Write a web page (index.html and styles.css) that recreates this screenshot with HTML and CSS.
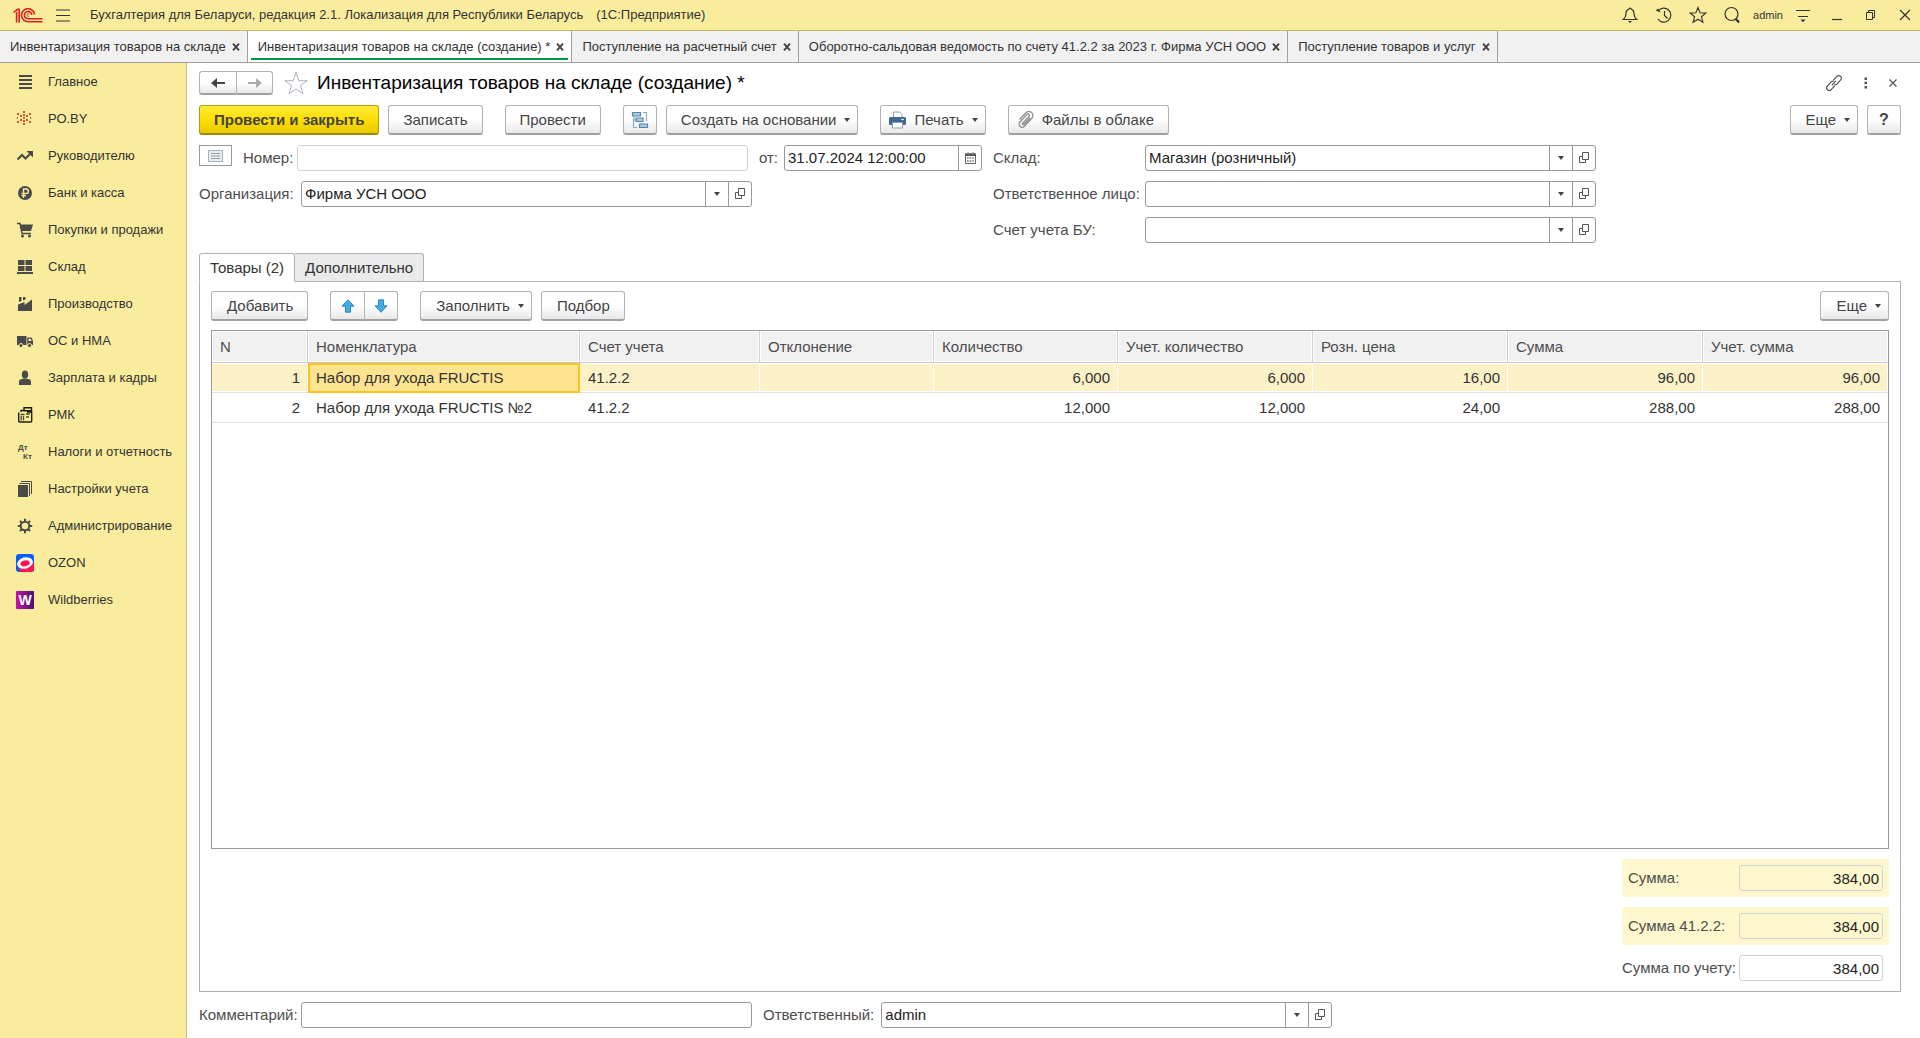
FILE: index.html
```html
<!DOCTYPE html>
<html lang="ru">
<head>
<meta charset="utf-8">
<meta name="viewport" content="width=device-width, initial-scale=1">
<title>Инвентаризация товаров на складе (создание) *</title>
<link rel="stylesheet" href="styles.css">
</head>
<body>
<svg class="defs" aria-hidden="true">
  <symbol id="i-open" viewBox="0 0 12 12"><path d="M4.500.5h6v7h-6zM4 4.500H1.500v6h6V8" fill="none" stroke="#555"/></symbol>
  <symbol id="i-x" viewBox="0 0 8 8"><path d="M1 .7l6 6.600M7 .7L1 7.300" stroke="#444" stroke-width="2"/></symbol>
  <symbol id="i-caret" viewBox="0 0 6 4"><path d="M0 0h6L3 4z" fill="#444"/></symbol>
</svg>

<header class="titlebar">
  <svg class="logo" viewBox="0 0 30 15" role="img" aria-label="1С"><g fill="none" stroke="#dc1f1f" stroke-width="1.600"><path d="M.5 4.500L4.500 1.300H6.200V14.500M3.600 4v10.500"/><path d="M21.500 6.500A6.500 6.500 0 1 0 15.500 13.700H29.500"/><path d="M18.800 7A3.700 3.700 0 1 0 15.500 10.800H29.500" /><path d="M16.500 6.500a1.300 1.300 0 1 0-.8 1.800" stroke-width="1"/></g></svg>
  <button class="ghost menu" type="button" aria-label="Меню"><svg width="14" height="13" viewBox="0 0 14 13"><path d="M0 1h14M0 6.500h14M0 12h14" stroke="#333" stroke-width="1.200"/></svg></button>
  <span class="app-name">Бухгалтерия для Беларуси, редакция 2.1. Локализация для Республики Беларусь</span>
  <span>(1С:Предприятие)</span>
  <div class="tools">
    <button class="ghost" type="button" aria-label="Уведомления"><svg width="18" height="18" viewBox="0 0 18 18"><path d="M9 2c-.6 0-1 .4-1 1-2 .7-3 2.200-3 4.500 0 3-1 4.500-2.700 6h13.400C14 12 13 10.500 13 7.500 13 5.200 12 3.700 10 3c0-.6-.4-1-1-1z" fill="none" stroke="#333" stroke-width="1.200"/><path d="M7 15h4l-2 2z" fill="#333"/></svg></button>
    <button class="ghost" type="button" aria-label="История"><svg width="18" height="18" viewBox="0 0 18 18"><path d="M3.200 5A7 7 0 1 1 3 13M9.500 5v4.500l3 3" fill="none" stroke="#333" stroke-width="1.200"/><path d="M.8 4.500l5 2L3 2.500z" fill="#333"/></svg></button>
    <button class="ghost" type="button" aria-label="Избранное"><svg width="18" height="18" viewBox="0 0 18 18"><path d="M9 1.500l2.100 5.300 5.700.3-4.400 3.600 1.500 5.600L9 13.200l-4.900 3.100 1.500-5.600L1.200 7.100l5.700-.3z" fill="none" stroke="#333" stroke-width="1.100"/></svg></button>
    <button class="ghost" type="button" aria-label="Поиск"><svg width="18" height="18" viewBox="0 0 18 18"><circle cx="8.500" cy="8" r="6.500" fill="none" stroke="#333" stroke-width="1.200"/><path d="M12.500 12.500l3.500 4" stroke="#333" stroke-width="2.200"/></svg></button>
    <a class="user" href="#">admin</a>
    <button class="ghost" type="button" aria-label="Настройка"><svg width="16" height="18" viewBox="0 0 16 18"><path d="M1 4.500h14M3 10.500h10" stroke="#333" stroke-width="1.200"/><path d="M5.500 13.500h5L8 16.200z" fill="#333"/></svg></button>
    <button class="ghost" type="button" aria-label="Свернуть"><svg width="16" height="18" viewBox="0 0 16 18"><path d="M3 13.500h10" stroke="#333" stroke-width="1.200"/></svg></button>
    <button class="ghost" type="button" aria-label="Развернуть"><svg width="16" height="18" viewBox="0 0 16 18"><path d="M3.500 6.500h6v7h-6zM5.500 6V4.500h6v7H10" fill="none" stroke="#333"/></svg></button>
    <button class="ghost" type="button" aria-label="Закрыть программу"><svg width="16" height="18" viewBox="0 0 16 18"><path d="M3 4l10 10M13 4L3 14" stroke="#333" stroke-width="1.200"/></svg></button>
  </div>
</header>

<nav class="windows" aria-label="Открытые окна">
  <div class="window"><a href="#">Инвентаризация товаров на складе</a><button class="ghost" type="button" aria-label="Закрыть"><svg width="8" height="8"><use href="#i-x"/></svg></button></div>
  <div class="window current"><a href="#" aria-current="page">Инвентаризация товаров на складе (создание) *</a><button class="ghost" type="button" aria-label="Закрыть"><svg width="8" height="8"><use href="#i-x"/></svg></button></div>
  <div class="window"><a href="#">Поступление на расчетный счет</a><button class="ghost" type="button" aria-label="Закрыть"><svg width="8" height="8"><use href="#i-x"/></svg></button></div>
  <div class="window"><a href="#">Оборотно-сальдовая ведомость по счету 41.2.2 за 2023 г. Фирма УСН ООО</a><button class="ghost" type="button" aria-label="Закрыть"><svg width="8" height="8"><use href="#i-x"/></svg></button></div>
  <div class="window"><a href="#">Поступление товаров и услуг</a><button class="ghost" type="button" aria-label="Закрыть"><svg width="8" height="8"><use href="#i-x"/></svg></button></div>
</nav>

<div class="workspace">
  <nav class="sections" aria-label="Разделы">
    <a href="#"><svg viewBox="0 0 18 18"><path d="M3 3h13M3 7h13M3 11h13M3 15h13" stroke="#4a4a4a" stroke-width="2"/></svg>Главное</a>
    <a href="#"><svg viewBox="0 0 18 18"><path d="M7 1h2v2H7zM7 4h2v2H7zM7 7h2v2H7zM7 10h2v2H7zM7 13h2v2H7zM4 5h2v2H4zM4 9h2v2H4zM10 5h2v2h-2zM10 9h2v2h-2zM1 3h2v2H1zM1 11h2v2H1zM13 3h2v2h-2zM13 11h2v2h-2zM1 7h1v2H1zM14 7h1v2h-1z" fill="#d9532c"/></svg>РО.BY</a>
    <a href="#"><svg viewBox="0 0 18 18"><path d="M1.500 12.500L6 8l3.500 3.500L15 6" fill="none" stroke="#4a4a4a" stroke-width="2.200"/><path d="M10.500 4H17v6.500z" fill="#4a4a4a"/></svg>Руководителю</a>
    <a href="#"><svg viewBox="0 0 18 18"><circle cx="9" cy="9" r="7" fill="#4a4a4a"/><path d="M7.500 14V5h2.700a2.200 2.200 0 0 1 0 4.400H5.500M5.500 11.500h4.500" fill="none" stroke="#faec9d" stroke-width="1.400"/></svg>Банк и касса</a>
    <a href="#"><svg viewBox="0 0 18 18"><path d="M1 2.500h3l2 10h9" fill="none" stroke="#4a4a4a" stroke-width="1.400"/><path d="M4 3.500h13L15 10H5.500z" fill="#4a4a4a"/><circle cx="6.500" cy="15" r="1.500" fill="#4a4a4a"/><circle cx="13.500" cy="15" r="1.500" fill="#4a4a4a"/></svg>Покупки и продажи</a>
    <a href="#"><svg viewBox="0 0 18 18"><path d="M2 2h6.500v5H2zM9.500 2H16v5H9.500zM2 8h6.500v5H2zM9.500 8H16v5H9.500zM1 14h16v2H1z" fill="#4a4a4a"/></svg>Склад</a>
    <a href="#"><svg viewBox="0 0 18 18"><path d="M2 16V9.500L8.500 7v3L16 4.500V16zM3 2h2.500v4L3 7zM7 2h2.500v2.500L7 5.500z" fill="#4a4a4a"/></svg>Производство</a>
    <a href="#"><svg viewBox="0 0 18 18"><path d="M1 4h9.500v9H1zM11.200 5.500h4.300L17 9v4h-5.800z" fill="#4a4a4a"/><path d="M12.500 6.700h2.200l.9 2.300h-3.100z" fill="#faec9d"/><g fill="#4a4a4a" stroke="#faec9d"><circle cx="5" cy="13.500" r="2"/><circle cx="13.500" cy="13.500" r="2"/></g></svg>ОС и НМА</a>
    <a href="#"><svg viewBox="0 0 18 18"><ellipse cx="9" cy="5.500" rx="3.200" ry="4" fill="#4a4a4a"/><path d="M3 16v-3.500c0-2 2.500-2.500 4.500-3h3c2 .5 4.500 1 4.500 3V16z" fill="#4a4a4a"/></svg>Зарплата и кадры</a>
    <a href="#"><svg viewBox="0 0 18 18"><path d="M2.700 6.500V15q0 1 1 1h11q1 0 1-1V6h-4V4.500M5 6V4.500h3M8 1.700h7.500v3H8z" fill="none" stroke="#1c1c10" stroke-width="1.400"/><path d="M4.500 8.500h4M5.200 10v4.500M7.500 10v4.500M10 8h4M10 11h3" stroke="#4a4a2a" stroke-width="1.300"/></svg>РМК</a>
    <a href="#"><svg class="dtkt" viewBox="0 0 18 18"><text x="2" y="7">Дт</text><text x="7" y="16">Кт</text></svg>Налоги и отчетность</a>
    <a href="#"><svg viewBox="0 0 18 18"><path d="M2 5h10v12H2z" fill="#4a4a4a"/><path d="M3.500 3.500h10V16M5 1.500h10.500V14" fill="none" stroke="#4a4a4a"/></svg>Настройки учета</a>
    <a href="#"><svg viewBox="0 0 18 18"><circle cx="9" cy="9" r="4.300" fill="none" stroke="#4a4a4a" stroke-width="2"/><path d="M9 1.800v3M9 13.200v3M1.800 9h3M13.200 9h3M3.900 3.900L6 6M12 12l2.100 2.100M14.100 3.900L12 6M6 12l-2.100 2.100" stroke="#4a4a4a" stroke-width="2"/></svg>Администрирование</a>
    <a href="#"><svg viewBox="0 0 18 18"><rect width="18" height="18" rx="3" fill="#0a5cff"/><path d="M18 9v6q0 3-3 3H4L3 14z" fill="#fb1654"/><ellipse cx="9" cy="9" rx="8" ry="5.600" transform="rotate(-15 9 9)" fill="#fff"/><ellipse cx="9" cy="9.300" rx="4.800" ry="2.900" transform="rotate(-12 9 9)" fill="#fb1654"/></svg>OZON</a>
    <a href="#"><svg class="wb" viewBox="0 0 18 18"><defs><linearGradient id="wbg"><stop offset="0" stop-color="#cb11a5"/><stop offset="1" stop-color="#45136f"/></linearGradient></defs><rect width="18" height="18" rx="1" fill="url(#wbg)"/><text x="9" y="14" text-anchor="middle">W</text></svg>Wildberries</a>
  </nav>

  <main class="document">
    <div class="heading">
      <div class="group history">
        <button class="btn" type="button" aria-label="Назад"><svg width="14" height="10" viewBox="0 0 14 10"><path d="M14 5H3" stroke="#444" stroke-width="2"/><path d="M0 5l6-5v10z" fill="#444"/></svg></button>
        <button class="btn" type="button" aria-label="Вперед"><svg width="14" height="10" viewBox="0 0 14 10"><path d="M0 5h11" stroke="#aaa" stroke-width="2"/><path d="M14 5L8 0v10z" fill="#aaa"/></svg></button>
      </div>
      <button class="ghost" type="button" aria-label="В избранное"><svg width="24" height="24" viewBox="0 0 24 24"><path d="M12 1.500l2.800 8.200h8.400l-6.700 5 2.500 8L12 17.800 5 22.700l2.500-8-6.700-5h8.400z" fill="none" stroke="#aab2ba"/></svg></button>
      <h1>Инвентаризация товаров на складе (создание) *</h1>
      <div class="heading-tools">
        <button class="ghost" type="button" aria-label="Получить ссылку"><svg width="18" height="18" viewBox="0 0 18 18"><g fill="none" stroke="#555" stroke-width="1.200" stroke-linecap="round"><path d="M8.500 6.200l3.300-3.800a2.600 2.600 0 0 1 3.900 3.500l-3.500 4a2.400 2.400 0 0 1-2.300.8"/><path d="M9.500 11.800l-3.300 3.800a2.600 2.600 0 0 1-3.900-3.500l3.500-4a2.400 2.400 0 0 1 2.300-.8"/><path d="M7.300 10.900l3.400-3.800"/></g></svg></button>
        <button class="ghost" type="button" aria-label="Еще"><svg width="4" height="12" viewBox="0 0 4 12"><path d="M.5.5h2.500v2.500H.5zM.5 4.800h2.500v2.500H.5zM.5 9h2.500v2.500H.5z" fill="#555"/></svg></button>
        <button class="ghost" type="button" aria-label="Закрыть документ"><svg width="8" height="8" viewBox="0 0 8 8"><path d="M.5.5l7 7M7.500.5l-7 7" stroke="#555" stroke-width="1.200"/></svg></button>
      </div>
    </div>

    <div class="toolbar">
      <button class="btn primary" type="button">Провести и закрыть</button>
      <button class="btn apart" type="button">Записать</button>
      <button class="btn apart" type="button">Провести</button>
      <button class="btn icon" type="button" aria-label="Структура подчиненности"><svg width="18" height="18" viewBox="0 0 18 18"><path d="M3 5v4h3M10 12v3h3M12 1.500h3.500V10M2.500 8v8.500H6" fill="none" stroke="#87adc9" stroke-width="1.200"/><path d="M1.500 1.500h8v3.500h-8zM5 7h7v3.500H5zM8.500 13h8v3.500h-8z" fill="#a9c9df" stroke="#5688ad" stroke-width="1.200"/></svg></button>
      <button class="btn apart more" type="button" aria-haspopup="menu">Создать на основании<svg width="6" height="4"><use href="#i-caret"/></svg></button>
      <button class="btn apart more with-icon" type="button" aria-haspopup="menu"><svg width="17" height="18" viewBox="0 0 17 18"><path d="M4.500 8V1h6l2.500 2.500V8" fill="#fff" stroke="#8aa0b2"/><rect y="6" width="17" height="8" rx="1.500" fill="#41698f"/><path d="M3.500 11.500h10v5.500h-10z" fill="#fff" stroke="#8aa0b2"/><path d="M12 8.500h3" stroke="#cfe0ee" stroke-width="1.200"/></svg>Печать<svg width="6" height="4"><use href="#i-caret"/></svg></button>
      <button class="btn with-icon" type="button"><svg width="17" height="18" viewBox="0 0 17 18"><path d="M5 13l7-7.500a1.400 1.400 0 0 0-2-2L3 11a3 3 0 0 0 4.300 4.300l7.500-8A4 4 0 0 0 9 1.700L2.500 8.500M5 13a1.300 1.300 0 0 0 2 .3l6-6.300" fill="none" stroke="#8c8c8c" stroke-width="1.300"/></svg>Файлы в облаке</button>
      <button class="btn more push" type="button" aria-haspopup="menu">Еще<svg width="6" height="4"><use href="#i-caret"/></svg></button>
      <button class="btn icon help" type="button" aria-label="Справка">?</button>
    </div>

    <form class="fields">
      <div class="column">
        <div class="line">
          <button class="status" type="button" aria-label="Состояние документа"><svg width="15" height="12" viewBox="0 0 15 12"><rect x=".5" y=".5" width="14" height="11" fill="#e6ebf0" stroke="#a9b4bf"/><path d="M3 3.500h9M3 6h9M3 8.500h9" stroke="#98a4b0"/></svg></button>
          <label for="number">Номер:</label>
          <input class="box quiet" id="number" type="text" readonly>
          <label class="from" for="date">от:</label>
          <span class="box date"><input id="date" type="text" value="31.07.2024 12:00:00"><button type="button" aria-label="Выбрать дату"><svg width="11" height="12" viewBox="0 0 11 12"><path d="M.5 2h10v9.500H.5z" fill="#fff" stroke="#666"/><path d="M0 1.500h11V4H0z" fill="#555"/><path d="M3 0v3M8 0v3" stroke="#888"/><path d="M2 6h7M2 9h7" stroke="#777" stroke-width="1.300" stroke-dasharray="1.600 1"/></svg></button></span>
        </div>
        <div class="line">
          <label class="lead" for="org">Организация:</label>
          <span class="box"><select id="org"><option>Фирма УСН ООО</option></select><span class="drop"><svg width="6" height="4"><use href="#i-caret"/></svg></span><button type="button" aria-label="Открыть"><svg width="12" height="12"><use href="#i-open"/></svg></button></span>
        </div>
      </div>
      <div class="column second">
        <div class="line">
          <label for="store">Склад:</label>
          <span class="box"><select id="store"><option>Магазин (розничный)</option></select><span class="drop"><svg width="6" height="4"><use href="#i-caret"/></svg></span><button type="button" aria-label="Открыть"><svg width="12" height="12"><use href="#i-open"/></svg></button></span>
        </div>
        <div class="line">
          <label for="person">Ответственное лицо:</label>
          <span class="box"><select id="person"><option></option></select><span class="drop"><svg width="6" height="4"><use href="#i-caret"/></svg></span><button type="button" aria-label="Открыть"><svg width="12" height="12"><use href="#i-open"/></svg></button></span>
        </div>
        <div class="line">
          <label for="account">Счет учета БУ:</label>
          <span class="box"><select id="account"><option></option></select><span class="drop"><svg width="6" height="4"><use href="#i-caret"/></svg></span><button type="button" aria-label="Открыть"><svg width="12" height="12"><use href="#i-open"/></svg></button></span>
        </div>
      </div>
    </form>

    <div class="tabs" role="tablist">
      <button class="tab active" type="button" role="tab" aria-selected="true">Товары (2)</button>
      <button class="tab" type="button" role="tab" aria-selected="false">Дополнительно</button>
    </div>

    <section class="panel">
      <div class="toolbar">
        <button class="btn apart" type="button">Добавить</button>
        <div class="group arrows apart">
          <button class="btn" type="button" aria-label="Вверх"><svg width="14" height="14" viewBox="0 0 14 14"><path d="M7 .7l6 6.500H9.500v6h-5v-6H1z" fill="#41ace8" stroke="#2f86bb"/></svg></button>
          <button class="btn" type="button" aria-label="Вниз"><svg width="14" height="14" viewBox="0 0 14 14"><path d="M7 13.300l6-6.500H9.500v-6h-5v6H1z" fill="#41ace8" stroke="#2f86bb"/></svg></button>
        </div>
        <button class="btn more" type="button" aria-haspopup="menu">Заполнить<svg width="6" height="4"><use href="#i-caret"/></svg></button>
        <button class="btn" type="button">Подбор</button>
        <button class="btn more push" type="button" aria-haspopup="menu">Еще<svg width="6" height="4"><use href="#i-caret"/></svg></button>
      </div>

      <div class="grid">
        <table>
          <colgroup><col class="c-n"><col class="c-item"><col class="c-account"><col class="c-diff"><col class="c-qty"><col class="c-wide"><col class="c-wide"><col class="c-wide"><col class="c-last"></colgroup>
          <thead>
            <tr><th>N</th><th>Номенклатура</th><th>Счет учета</th><th>Отклонение</th><th>Количество</th><th>Учет. количество</th><th>Розн. цена</th><th>Сумма</th><th>Учет. сумма</th></tr>
          </thead>
          <tbody>
            <tr class="selected"><td class="num">1</td><td class="cursor">Набор для ухода FRUCTIS</td><td>41.2.2</td><td></td><td class="num">6,000</td><td class="num">6,000</td><td class="num">16,00</td><td class="num">96,00</td><td class="num">96,00</td></tr>
            <tr><td class="num">2</td><td>Набор для ухода FRUCTIS №2</td><td>41.2.2</td><td></td><td class="num">12,000</td><td class="num">12,000</td><td class="num">24,00</td><td class="num">288,00</td><td class="num">288,00</td></tr>
          </tbody>
        </table>
      </div>

      <div class="totals">
        <div class="total marked"><label for="sum">Сумма:</label><input class="box quiet" id="sum" type="text" value="384,00" readonly></div>
        <div class="total marked"><label for="sum-account">Сумма 41.2.2:</label><input class="box quiet" id="sum-account" type="text" value="384,00" readonly></div>
        <div class="total"><label for="sum-book">Сумма по учету:</label><input class="box quiet" id="sum-book" type="text" value="384,00" readonly></div>
      </div>
    </section>

    <div class="line footer">
      <label class="lead" for="comment">Комментарий:</label>
      <input class="box" id="comment" type="text">
      <label class="responsible" for="responsible">Ответственный:</label>
      <span class="box"><select id="responsible"><option>admin</option></select><span class="drop"><svg width="6" height="4"><use href="#i-caret"/></svg></span><button type="button" aria-label="Открыть"><svg width="12" height="12"><use href="#i-open"/></svg></button></span>
    </div>
  </main>
</div>
</body>
</html>
```
FILE: styles.css
```css
* { box-sizing: border-box; }

body {
  margin: 0;
  min-height: 100vh;
  display: flex;
  flex-direction: column;
  background: #fff;
  color: #333;
  font: 15px/18px "Liberation Sans", Arial, sans-serif;
}

button, input, select { font: inherit; color: inherit; margin: 0; }
a { color: inherit; text-decoration: none; }
svg { display: block; flex: none; }
.defs { display: none; }

.ghost {
  display: flex;
  align-items: center;
  justify-content: center;
  padding: 0;
  border: 0;
  background: none;
}

/* Title bar */
.titlebar {
  display: flex;
  align-items: center;
  height: 31px;
  padding: 0 5px 0 13px;
  border-bottom: 1px solid #c6b96a;
  background: #faec9d;
  font-size: 13px;
  white-space: nowrap;
}
.logo { width: 30px; height: 15px; }
.menu { margin: 0 20px 0 13px; }
.app-name { margin-right: 13px; }
.tools { display: flex; align-items: center; gap: 16px; margin-left: auto; }
.tools .user { font-size: 11px; margin: 0 -4px; }
.tools .user ~ .ghost { margin-right: 2px; }

/* Open windows */
.windows {
  display: flex;
  height: 32px;
  border-bottom: 1px solid #a0a0a0;
  background: #f1f1f1;
  font-size: 13px;
  white-space: nowrap;
}
.window {
  display: flex;
  align-items: center;
  gap: 6px;
  padding: 0 7px 0 10px;
  border-right: 1px solid #a0a0a0;
}
.window.current {
  background: linear-gradient(#009646, #009646) center bottom 2px / calc(100% - 6px) 2px no-repeat #fff;
}

/* Sections */
.workspace { display: flex; flex: 1; }
.sections {
  flex: none;
  width: 187px;
  border-right: 1px solid #c6bd82;
  background: #faec9d;
  font-size: 13px;
}
.sections a {
  display: flex;
  align-items: center;
  gap: 14px;
  height: 37px;
  padding-left: 16px;
  white-space: nowrap;
}
.sections svg { width: 18px; height: 18px; }
.dtkt { font-size: 8px; font-weight: bold; fill: #4a4a4a; }
.wb { font-size: 14px; font-weight: bold; fill: #fff; }

/* Document */
.document {
  display: flex;
  flex-direction: column;
  flex: 1;
  min-width: 0;
  padding: 8px 19px 10px 12px;
}
.heading { display: flex; align-items: center; gap: 11px; height: 24px; }
.heading h1 { margin: 0 0 0 -2px; font-size: 19px; font-weight: normal; line-height: 24px; color: #000; }
.heading-tools { display: flex; align-items: center; gap: 21px; margin: 0 4px 0 auto; }

.toolbar { display: flex; gap: 9px; }
.document > .toolbar { margin-top: 10px; }

.btn {
  display: flex;
  align-items: center;
  justify-content: center;
  height: 30px;
  padding: 0 14px;
  border: 1px solid #b3b3b3;
  border-bottom: 2px solid #a0a0a0;
  border-radius: 3px;
  background: linear-gradient(#fff 50%, #e8e8e8);
  color: #444;
  white-space: nowrap;
}
.btn.primary {
  border-color: #b0a010 #b0a010 #9c8c00;
  background: linear-gradient(#ffe93b, #ffdf00 50%, #e8c800);
  font-weight: bold;
}
.btn.apart, .group.apart { margin-right: 13px; }
.btn.icon { width: 34px; padding: 0; }
.btn.help { font-weight: bold; font-size: 16px; }
.btn.more { gap: 8px; padding-right: 7px; }
.btn.with-icon { gap: 8px; padding-left: 8px; }
.btn.push { margin-left: auto; }

.group { display: flex; }
.group .btn { width: 34px; padding: 0; }
.group .btn:first-child { border-right: 0; border-radius: 3px 0 0 3px; }
.group .btn:last-child { border-radius: 0 3px 3px 0; }
.history .btn { width: 37px; height: 24px; }

/* Form */
.fields { display: flex; gap: 11px; margin: 10px 0; color: #444; }
.column { display: flex; flex-direction: column; gap: 10px; flex: 0 1 783px; }
.column.second { flex: 0 1 603px; }
.line { display: flex; align-items: center; height: 26px; white-space: nowrap; }
.line label { color: #4d4d4d; }
.lead { flex: none; width: 102px; }
.second label { flex: none; width: 152px; }
.status {
  display: flex;
  flex: none;
  justify-content: center;
  align-items: center;
  align-self: flex-start;
  width: 33px;
  height: 21px;
  margin-right: 11px;
  padding: 0;
  border: 1px solid #999;
  background: #fff;
}
.from { margin: 0 6px 0 11px; }

.box {
  display: flex;
  flex: 0 1 451px;
  min-width: 0;
  height: 26px;
  border: 1px solid #999;
  border-radius: 3px;
  background: #fff;
  color: #222;
  padding: 0;
}
input.box { padding: 0 3px; }
.box.quiet { border-color: #d2d2d2; }
.status ~ .quiet { flex: 1 1 451px; margin-left: 4px; }
.box.date { flex: none; width: 198px; }
.box input, .box select {
  flex: 1;
  min-width: 0;
  width: 100%;
  padding: 0 0 0 3px;
  border: 0;
  background: none;
  appearance: none;
  outline: 0;
}
.box button, .drop {
  display: flex;
  align-items: center;
  justify-content: center;
  flex: none;
  width: 23px;
  padding: 0;
  border: 0;
  border-left: 1px solid #999;
  background: none;
}
.drop { pointer-events: none; }

/* Tabs and panel */
.tabs { display: flex; z-index: 1; margin-bottom: -1px; }
.tab {
  height: 29px;
  padding: 0 10px;
  border: 1px solid #b0b0b0;
  border-left-width: 0;
  border-radius: 0 3px 0 0;
  background: #eaeaea;
}
.tab.active {
  border-left-width: 1px;
  border-bottom-color: #fff;
  border-radius: 3px 3px 0 0;
  background: #fff;
}
.panel {
  display: flex;
  flex-direction: column;
  flex: 1;
  padding: 9px 11px 10px;
  border: 1px solid #b0b0b0;
}
.panel .btn { padding-left: 15px; }
.panel .group .btn { padding-left: 0; }

.grid { flex: 1; margin: 9px 0 10px; border: 1px solid #999; overflow: auto; }
.grid table { width: 100%; table-layout: fixed; border-collapse: separate; border-spacing: 0; }
.c-n { width: 96px; }
.c-item { width: 272px; }
.c-account { width: 180px; }
.c-diff { width: 174px; }
.c-qty { width: 184px; }
.c-wide { width: 195px; }
.c-last { width: 185px; }
.grid th {
  height: 32px;
  padding: 0 8px;
  border-bottom: 1px solid #c8c8c8;
  border-right: 1px solid #d0d0d0;
  background: #f1f1f1;
  box-shadow: inset 0 0 0 1px #fff;
  color: #4d4d4d;
  font-weight: normal;
  text-align: left;
}
.grid td {
  height: 30px;
  padding: 0 8px;
  border-bottom: 1px solid #e2e2e2;
  white-space: nowrap;
}
.grid th:last-child { border-right: 0; }
.grid .selected td { background: #fdf1c7; box-shadow: inset -1px -1px #fff, inset 0 1px #fff; }
.grid .selected .cursor { background: #fee491; outline: 2px solid #f9c41c; outline-offset: -2px; }
.grid .num { text-align: right; }

.totals { display: flex; flex-direction: column; gap: 10px; width: 267px; margin-left: auto; }
.total { display: flex; align-items: center; justify-content: space-between; padding-right: 6px; color: #4d4d4d; white-space: nowrap; }
.total.marked { padding: 6px; background: #fff8ce; }
.total .box { flex: none; width: 144px; background: none; text-align: right; }

.footer { margin-top: 10px; }
.responsible { margin: 0 7px 0 11px; }
```
